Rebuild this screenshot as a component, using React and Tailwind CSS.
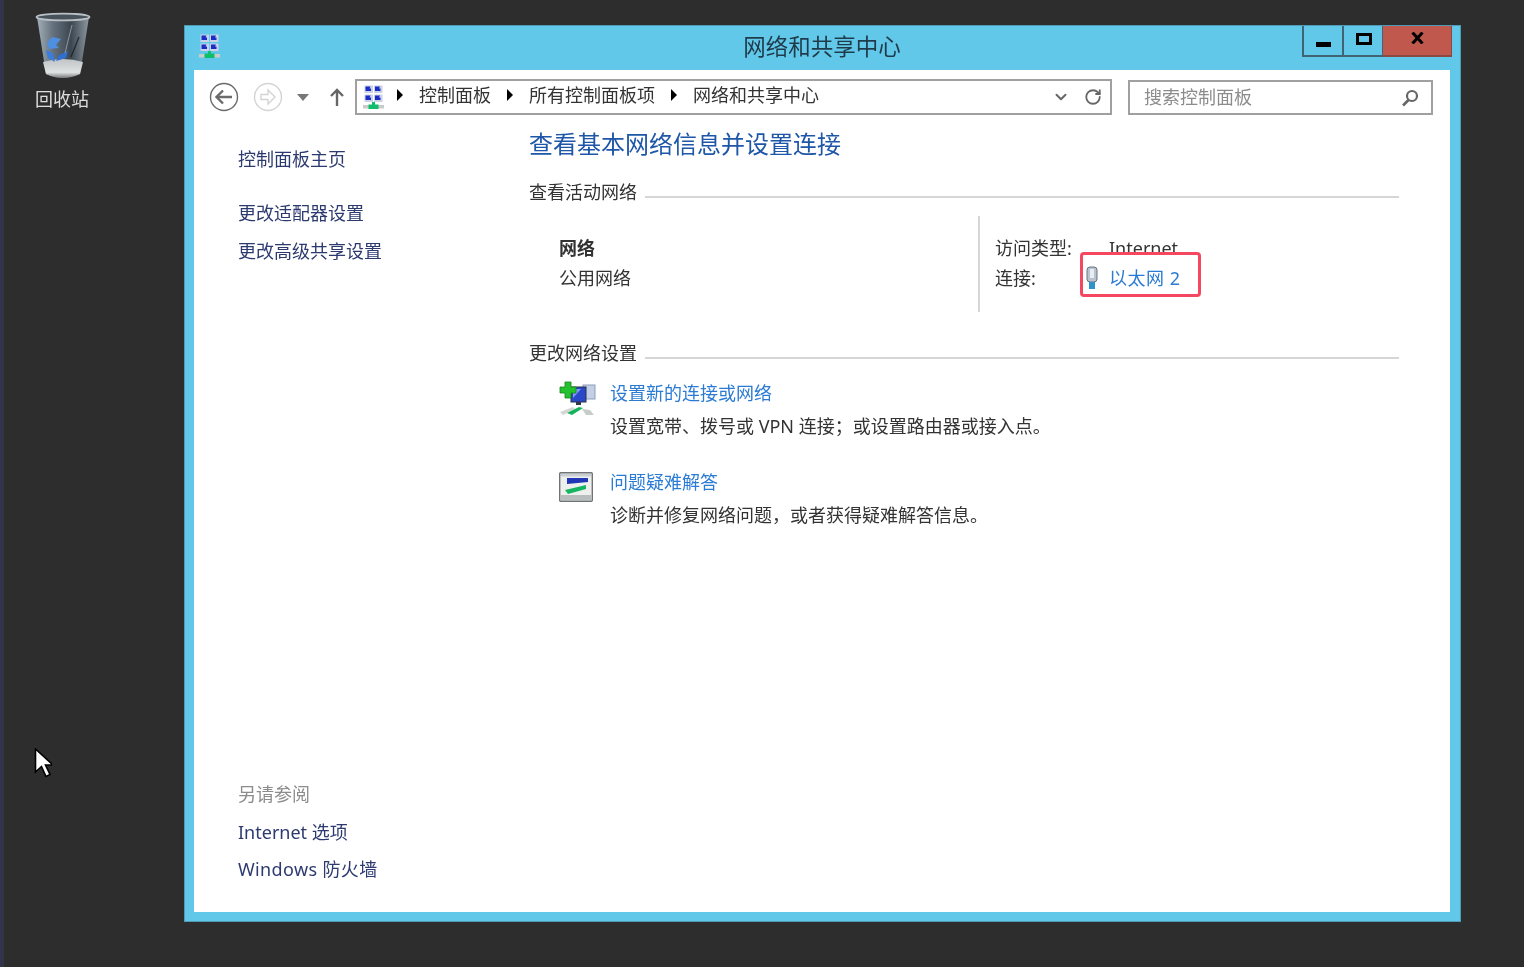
import React from "react";
import { RotateCw, ChevronDown } from "lucide-react";

function PanelIcon({ className }) {
  const screens = [[1.5, 0.5], [11, 0.5], [1.5, 9.5], [11, 9.5]];
  return (
    <svg viewBox="0 0 21 24" className={className}>
      {screens.map(([x, y]) => (
        <g key={`${x}-${y}`}>
          <rect x={x} y={y} width="8.5" height="7.5" fill="#ccd2e6" />
          <path d={`M${x + 1} ${y + 1}h5l-1 2h1.5v2.5h-5.5z`} fill="#1a2bc6" />
        </g>
      ))}
      <rect x="0" y="20" width="21" height="3.5" fill="#c9cdc9" />
      <path d="M9 17h3v2.500h3.500v4.500h-10v-4.500h3.500z" fill="#0fbd6c" />
    </svg>
  );
}

function BackArrow({ faded }) {
  const color = faded ? "#d4d4d4" : "#6b6b6b";
  return (
    <svg viewBox="0 0 30 30" className="w-[30px] h-[30px]">
      <circle cx="15" cy="15" r="13.5" fill="none" stroke={color} strokeWidth="1.4" />
      {faded ? (
        <path d="M8 12.5h7V8l7 7-7 7v-4.500H8z" fill="none" stroke={color} strokeWidth="1.4" />
      ) : (
        <path d="M23 15H8M14 8.500 7.500 15l6.500 6.500" fill="none" stroke={color} strokeWidth="2.4" />
      )}
    </svg>
  );
}

function Crumb({ children }) {
  return (
    <>
      <span className="w-0 h-0 border-y-[6px] border-y-transparent border-l-[6px] border-l-black" />
      <span>{children}</span>
    </>
  );
}

function RecycleBin() {
  return (
    <svg viewBox="0 0 56 70" className="w-[56px] h-[70px]">
      <defs>
        <linearGradient id="binBody" x1="0" x2="1" y1="0" y2="0">
          <stop offset="0" stopColor="#a3afb8" />
          <stop offset="0.3" stopColor="#66737e" />
          <stop offset="0.65" stopColor="#3c4650" />
          <stop offset="1" stopColor="#8d99a2" />
        </linearGradient>
        <linearGradient id="binBase" x1="0" x2="0" y1="0" y2="1">
          <stop offset="0" stopColor="#bfc4c6" />
          <stop offset="0.7" stopColor="#e0e2e3" />
          <stop offset="1" stopColor="#777a7c" />
        </linearGradient>
      </defs>
      <path d="M2 6 L11 63 Q28 71 45 63 L54 6 Z" fill="url(#binBody)" />
      <ellipse cx="28" cy="6" rx="26.500" ry="3.400" fill="#47525b" stroke="#b9c1c6" strokeWidth="1.8" />
      <path d="M8 51 Q28 45 48 51 L45 63 Q28 71 11 63 Z" fill="url(#binBase)" />
      <path d="M12 32 L17 26 L26 28 L21 34 L24 37 L14 38 Z" fill="#4f8fe0" />
      <path d="M21 50 L31 47 L33 40 L24 44 Z" fill="#2f6fd2" />
      <path d="M11 39 L18 42 L20 51 L13 47 Z" fill="#3c7cdc" />
      <path d="M37 14 L30 42" stroke="#8d99a2" strokeWidth="1" />
      <path d="M44 26 L36 46" stroke="#1f262c" strokeWidth="1.200" />
    </svg>
  );
}

function Cursor() {
  return (
    <svg viewBox="0 0 18 30" className="w-[18px] h-[30px]">
      <path d="M1.500 1v23l6-5.500 4.500 10 4-2-4.500-9.500h7.500z" fill="#fff" stroke="#000" strokeWidth="1.6" />
    </svg>
  );
}

function SetupIcon() {
  return (
    <svg viewBox="0 0 37 37" className="w-[37px] h-[37px]">
      <rect x="24" y="4" width="12" height="14" fill="#c2cfe6" stroke="#8e9db6" />
      <rect x="12" y="6" width="15" height="15" fill="#2a47c9" stroke="#2b3244" />
      <path d="M14 8h8l-8 9z" fill="#7f9cf2" />
      <rect x="17" y="21" width="5" height="3" fill="#30384a" />
      <path d="M1 31l13-5 2 2-12 6z" fill="#d3d6d3" />
      <path d="M8 32l12-6 4 1-11 7z" fill="#14b35a" />
      <path d="M23 28l8 1 4 5-8 0z" fill="#c9cdc9" />
      <path d="M6 1h6v5h5v6h-5v5H6v-5H1V6h5z" fill="#25c22f" stroke="#17801d" strokeWidth="0.8" />
    </svg>
  );
}

function TroubleshootIcon() {
  return (
    <svg viewBox="0 0 34 30" className="w-[34px] h-[30px]">
      <rect x="0.7" y="0.7" width="32.600" height="28.600" rx="1" fill="#eef0ee" stroke="#6f7476" strokeWidth="1.4" />
      <rect x="2" y="2" width="30" height="2.500" fill="#c9ced2" />
      <path d="M8 6h21v4L8 12z" fill="#1f36b5" />
      <path d="M6 18l21-5v4L9 22z" fill="#15b562" />
      <path d="M2 23h30v5H2z" fill="#b9bdbb" />
    </svg>
  );
}

function PlugIcon() {
  return (
    <svg viewBox="0 0 12 24" className="w-[12px] h-[24px]">
      <rect x="1" y="1" width="10" height="15" rx="3" fill="#b9c3cf" stroke="#66727f" />
      <rect x="4" y="3" width="4" height="9" fill="#e9edf1" />
      <rect x="3" y="16" width="6" height="7" fill="#2f92c8" />
    </svg>
  );
}

function SectionTitle({ children }) {
  return (
    <div className="flex items-center gap-2 w-[870px] leading-[24px] text-[#333]">
      <span>{children}</span>
      <span className="flex-1 h-[2px] mt-[10px] bg-[#d6d6d6]" />
    </div>
  );
}

export default function App() {
  return (
    <div className="flex w-[1524px] h-[967px] overflow-hidden bg-[#2d2d2d] text-[18px] font-['Noto_Sans','Noto_Sans_CJK_SC',sans-serif] blur-[0.6px] relative">
      <div className="w-1 h-full bg-[#33344a]" />

      <div className="w-[180px] pt-[11px] pl-[31px]">
        <RecycleBin />
        <div className="w-[54px] mt-[6px] text-center leading-[24px] text-[#dedede] whitespace-nowrap">回收站</div>
      </div>
      <div className="absolute left-[34px] top-[748px]">
        <Cursor />
      </div>

      <div className="mt-[25px] w-[1277px] h-[897px] flex flex-col bg-[#62c8ea] border border-[#4f9ab5] pl-[9px] pr-[10px] pb-[9px]">
        <div className="h-[44px] grid grid-cols-[1fr_auto_1fr]">
          <div className="pl-[5px] pt-[8px]">
            <PanelIcon className="w-[21px] h-[24px]" />
          </div>
          <div className="pt-[7px] text-[22.5px] leading-[28px] text-[#1f3a48]">网络和共享中心</div>
          <div className="flex justify-end items-start -mr-[2px]">
            <div className="w-[42px] h-[31px] border-x-2 border-b-2 border-[#3f6474] flex items-center justify-center">
              <span className="w-[15px] h-[5px] mt-[8px] bg-black" />
            </div>
            <div className="w-[39px] h-[31px] border-r border-b-2 border-[#3f6474] flex items-center justify-center">
              <span className="w-[16px] h-[12px] mb-[4px] ml-[2px] border-[3px] border-black" />
            </div>
            <div className="w-[69px] h-[31px] bg-[#c0584e] border-b-2 border-r border-[#8a4a44] flex items-center justify-center pb-[6px]">
              <svg viewBox="0 0 13 12" className="w-[13px] h-[12px]">
                <path d="M1.500 0.500 11.500 11.500M11.500 0.500 1.500 11.500" stroke="#000" strokeWidth="3" fill="none" />
              </svg>
            </div>
          </div>
        </div>

        <div className="flex-1 flex flex-col bg-white">
          <div className="h-[55px] flex items-start pl-[15px] pt-[12px]">
            <BackArrow />
            <span className="ml-[14px]"><BackArrow faded /></span>
            <span className="ml-[14px] mt-[12px] w-0 h-0 border-x-[6px] border-x-transparent border-t-[7px] border-t-[#777]" />
            <svg viewBox="0 0 16 20" className="ml-[20px] mt-[5px] w-[16px] h-[20px]">
              <path d="M8 19V3M2 9l6-6 6 6" fill="none" stroke="#666" strokeWidth="2.4" />
            </svg>
            <div className="ml-[10px] -mt-[3px] w-[757px] h-[36px] border-2 border-[#a0a0a0] flex items-center pl-[6px] pr-[8px] text-[#333] leading-[24px]">
              <PanelIcon className="w-[21px] h-[24px] shrink-0" />
              <span className="ml-[13px] -mt-[4px] flex items-center gap-[16px]">
                <Crumb>控制面板</Crumb>
                <Crumb>所有控制面板项</Crumb>
                <Crumb>网络和共享中心</Crumb>
              </span>
              <span className="ml-auto flex items-center gap-[14px] text-[#666]">
                <ChevronDown className="w-[18px] h-[18px]" strokeWidth={2.6} />
                <RotateCw className="w-[18px] h-[18px]" strokeWidth={2.4} />
              </span>
            </div>
            <div className="ml-[16px] -mt-[2px] w-[305px] h-[35px] border-2 border-[#a0a0a0] flex items-center pl-[14px] pr-[12px] text-[#8c8c8c] leading-[24px]">
              <span className="-mt-[2px]">搜索控制面板</span>
              <svg viewBox="0 0 18 18" className="ml-auto w-[18px] h-[18px]">
                <circle cx="11" cy="7" r="5" fill="none" stroke="#666" strokeWidth="2.2" />
                <path d="M7.500 11 2 16.500" stroke="#666" strokeWidth="2.6" />
              </svg>
            </div>
          </div>

          <div className="flex-1 flex">
            <div className="w-[335px] pl-[44px] pt-[22px] pb-[31px] flex flex-col justify-between leading-[24px] text-[#2d3a70]">
              <div>
                <div>控制面板主页</div>
                <div className="mt-[30px]">更改适配器设置</div>
                <div className="mt-[14px]">更改高级共享设置</div>
              </div>
              <div>
                <div className="text-[#8c8c8c]">另请参阅</div>
                <div className="mt-[14px]">Internet 选项</div>
                <div className="mt-[13px] tracking-[0.36px]">Windows 防火墙</div>
              </div>
            </div>

            <div className="flex-1 pt-[3px]">
              <h1 className="text-[24px] leading-[32px] text-[#1e56a8]">查看基本网络信息并设置连接</h1>
              <div className="mt-[20px]">
                <SectionTitle>查看活动网络</SectionTitle>
              </div>

              <div className="mt-[12px] h-[96px] flex text-[#333] leading-[30px]">
                <div className="w-[449px] pl-[30px] pt-[17px]">
                  <div className="font-bold">网络</div>
                  <div>公用网络</div>
                </div>
                <div className="border-l-2 border-[#d6d6d6] pl-[15px] pt-[17px]">
                  <div className="flex">
                    <span className="w-[114px]">访问类型:</span>
                    <span>Internet</span>
                  </div>
                  <div className="flex relative">
                    <span className="w-[91px]">连接:</span>
                    <span className="mt-[3px] mr-[11px]"><PlugIcon /></span>
                    <span className="text-[#2b7bd4] tracking-[0.5px]">以太网 2</span>
                    <span className="absolute left-[85px] -top-[11px] w-[121px] h-[45px] rounded-[4px] border-[3px] border-[#f5475f]" />
                  </div>
                </div>
              </div>

              <div className="mt-[29px]">
                <SectionTitle>更改网络设置</SectionTitle>
              </div>

              <div className="mt-[16px] pl-[30px] flex leading-[24px]">
                <div className="w-[51px]"><SetupIcon /></div>
                <div>
                  <div className="text-[#2b7bd4]">设置新的连接或网络</div>
                  <div className="mt-[9px] text-[#333]">设置宽带、拨号或 VPN 连接；或设置路由器或接入点。</div>
                </div>
              </div>

              <div className="mt-[32px] pl-[30px] flex leading-[24px]">
                <div className="w-[51px] pt-[2px]"><TroubleshootIcon /></div>
                <div>
                  <div className="text-[#2b7bd4]">问题疑难解答</div>
                  <div className="mt-[9px] text-[#333]">诊断并修复网络问题，或者获得疑难解答信息。</div>
                </div>
              </div>
            </div>
          </div>
        </div>
      </div>
    </div>
  );
}
